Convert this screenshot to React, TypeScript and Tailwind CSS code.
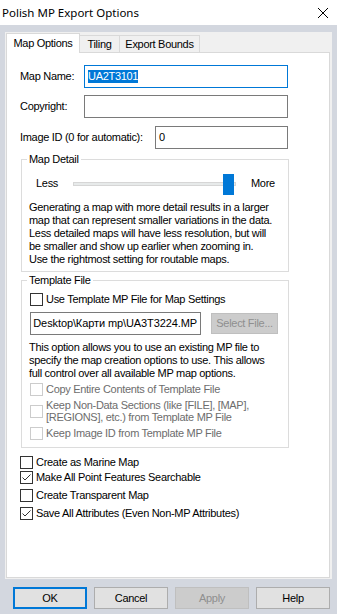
import type {ReactNode} from 'react'

function CheckBox({checked = false, disabled = false}: {checked?: boolean; disabled?: boolean}) {
  return (
    <span
      className={`flex h-[13px] w-[13px] shrink-0 items-center justify-center border bg-white ${
        disabled ? 'border-[#cccccc]' : 'border-[#333333]'
      }`}
    >
      {checked && (
        <svg viewBox="0 0 11 11" className="h-[11px] w-[11px]" aria-hidden="true">
          <path d="M1.5 5.5 L4 8 L9.5 2.5" fill="none" stroke="#333333" strokeWidth="1" />
        </svg>
      )}
    </span>
  )
}

function CheckRow({
  label,
  checked,
  disabled,
  className = '',
}: {
  label: ReactNode
  checked?: boolean
  disabled?: boolean
  className?: string
}) {
  return (
    <div className={`flex items-center gap-[3px] ${className}`}>
      <CheckBox checked={checked} disabled={disabled} />
      <span className={`whitespace-nowrap ${disabled ? 'text-[#6d6d6d]' : 'text-black'}`}>{label}</span>
    </div>
  )
}

function Button({label, primary, disabled}: {label: string; primary?: boolean; disabled?: boolean}) {
  let cls = 'border border-[#adadad] bg-[#e1e1e1] text-black'
  if (primary) cls = 'border-2 border-[#0078d7] bg-[#e1e1e1] text-black'
  if (disabled) cls = 'border border-[#bfbfbf] bg-[#cccccc] text-[#8f8f8f]'
  return (
    <button type="button" className={`flex h-[22px] w-[74px] items-center justify-center ${cls}`}>
      {label}
    </button>
  )
}

// explicit lines, the dialog wraps at fixed widths
function Lines({lines, className = ''}: {lines: string[]; className?: string}) {
  return (
    <div className={`whitespace-nowrap ${className}`}>
      {lines.map((l) => (
        <div key={l}>{l}</div>
      ))}
    </div>
  )
}

export default function App() {
  return (
    <div className="flex h-[614px] w-[337px] flex-col overflow-hidden bg-[#d3d7df] font-['Liberation_Sans',Arial,sans-serif] text-[11px] leading-[13px] tracking-[-0.3px] text-black">
      {/* title bar */}
      <div className="flex h-[25px] shrink-0 items-center justify-between bg-white pl-[2px] pr-[8px]">
        <span className="font-['Noto_Sans',sans-serif] text-[11.5px] tracking-normal">Polish MP Export Options</span>
        <svg viewBox="0 0 12 12" className="h-[12px] w-[12px]" aria-hidden="true">
          <path d="M1 1 L11 11 M11 1 L1 11" stroke="#000" strokeWidth="1" fill="none" />
        </svg>
      </div>

      {/* property sheet */}
      <div className="mx-[5px] mt-[7px] flex h-[547px] shrink-0 flex-col bg-[#f0f0f0] pl-[1px] pr-[2px] pt-[1px]">
        <div className="flex h-[19px] items-end">
          <div className="relative z-10 -mb-[1px] flex h-[20px] w-[74px] items-center justify-center border-x border-t border-[#d9d9d9] bg-white pb-[1px]">
            Map Options
          </div>
          <div className="flex h-[17px] w-[40px] items-center justify-center border-r border-t border-[#d9d9d9]">
            Tiling
          </div>
          <div className="flex h-[17px] w-[80px] items-center justify-center border-r border-t border-[#d9d9d9]">
            Export Bounds
          </div>
        </div>

        <div className="flex h-[526px] flex-col border border-[#d9d9d9] bg-white">
          <div className="mt-[12px] flex h-[23px] items-center pl-[13px]">
            <span className="w-[64px]">Map Name:</span>
            <div className="flex h-[23px] w-[204px] items-center border border-[#0078d7] pl-[3px]">
              <span className="bg-[#0078d7] text-white">UA2T3101</span>
            </div>
          </div>
          <div className="mt-[7px] flex h-[23px] items-center pl-[13px]">
            <span className="w-[64px]">Copyright:</span>
            <div className="h-[23px] w-[204px] border border-[#7a7a7a]" />
          </div>
          <div className="mt-[8px] flex h-[23px] items-center pl-[13px]">
            <span className="w-[135px]">Image ID (0 for automatic):</span>
            <div className="flex h-[23px] w-[133px] items-center border border-[#7a7a7a] pl-[3px]">0</div>
          </div>

          <fieldset className="ml-[14px] mt-[4px] w-[268px] border border-[#dcdcdc] pb-[5px]">
            <legend className="ml-[5px] px-[2px]">Map Detail</legend>
            <div className="mt-[7px] flex h-[21px] items-center pl-[14px]">
              <span className="w-[37px]">Less</span>
              <div className="relative h-[4px] w-[163px] border border-[#d6d6d6] bg-[#e7eaea]">
                <div className="absolute right-[1px] top-[-9px] h-[21px] w-[11px] bg-[#0078d7]" />
              </div>
              <span className="ml-[15px]">More</span>
            </div>
            <Lines
              className="mt-[7px] pl-[7px]"
              lines={[
                'Generating a map with more detail results in a larger',
                'map that can represent smaller variations in the data.',
                'Less detailed maps will have less resolution, but will',
                'be smaller and show up earlier when zooming in.',
                'Use the rightmost setting for routable maps.',
              ]}
            />
          </fieldset>

          <fieldset className="ml-[14px] mt-[2px] w-[268px] border border-[#dcdcdc] pb-[7px]">
            <legend className="ml-[5px] px-[2px]">Template File</legend>
            <CheckRow className="mt-[6px] pl-[8px]" label="Use Template MP File for Map Settings" />
            <div className="mt-[6px] flex items-center pl-[8px]">
              <div className="flex h-[23px] w-[171px] items-center justify-end overflow-hidden whitespace-nowrap border border-[#7a7a7a] pr-[3px] tracking-[-0.1px]">
                Desktop\Карти mp\UA3T3224.MP
              </div>
              <div className="ml-[10px] flex h-[21px] w-[67px] items-center justify-center border border-[#bfbfbf] bg-[#cccccc] text-[#8f8f8f]">
                Select File...
              </div>
            </div>
            <Lines
              className="mt-[6px] pl-[7px]"
              lines={[
                'This option allows you to use an existing MP file to',
                'specify the map creation options to use. This allows',
                'full control over all available MP map options.',
              ]}
            />
            <CheckRow className="mt-[3px] pl-[8px]" disabled label="Copy Entire Contents of Template File" />
            <div className="mt-[3px] flex items-center gap-[3px] pl-[8px] leading-[12px]">
              <CheckBox disabled />
              <span className="whitespace-nowrap text-[#6d6d6d]">
                Keep Non-Data Sections (like [FILE], [MAP],
                <br />
                [REGIONS], etc.) from Template MP File
              </span>
            </div>
            <CheckRow className="mt-[4px] pl-[8px]" disabled label="Keep Image ID from Template MP File" />
          </fieldset>

          <CheckRow className="mt-[8px] pl-[13px]" label="Create as Marine Map" />
          <CheckRow className="mt-[2px] pl-[13px]" checked label="Make All Point Features Searchable" />
          <CheckRow className="mt-[5px] pl-[13px]" label="Create Transparent Map" />
          <CheckRow className="mt-[5px] pl-[13px]" checked label="Save All Attributes (Even Non-MP Attributes)" />
        </div>
      </div>

      {/* buttons */}
      <div className="mt-[8px] flex gap-[7px] pl-[13px]">
        <Button label="OK" primary />
        <Button label="Cancel" />
        <Button label="Apply" disabled />
        <Button label="Help" />
      </div>
    </div>
  )
}
